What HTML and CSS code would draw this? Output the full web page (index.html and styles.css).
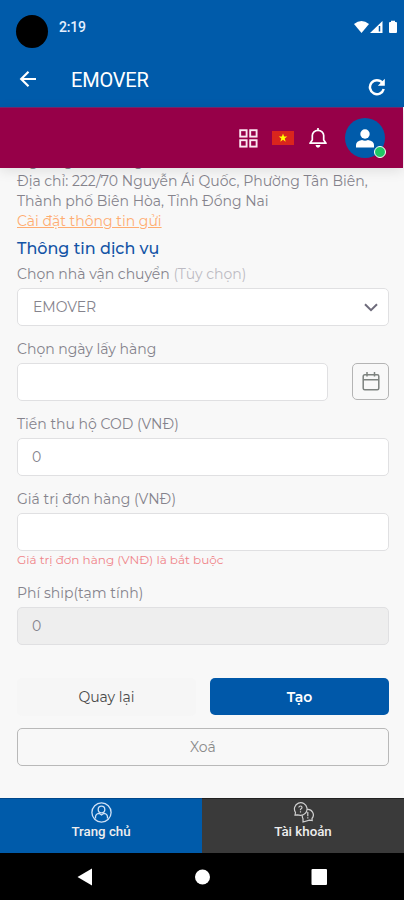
FILE: index.html
```
<!DOCTYPE html>
<html lang="vi">
<head>
<meta charset="utf-8">
<title>EMOVER</title>
<link rel="stylesheet" href="styles.css">
</head>
<body>
<div class="phone">
  <header class="top">
    <div class="status">
      <span class="camera"></span>
      <span class="clock">2:19</span>
      <svg class="signals" width="45" height="16" viewBox="0 0 45 16" fill="#fff">
        <path d="M0 4Q7.500-2 15 4L7.500 13Z"/>
        <path d="M16 13L28.500 1V13Z"/><path d="M25.500 6V11.500" stroke="#005baa" stroke-width="1.500"/>
        <path d="M35 3Q35 2 36 2H37V.8H41V2H42Q43 2 43 3V12Q43 13 42 13H36Q35 13 35 12Z"/>
      </svg>
    </div>
    <div class="appbar">
      <svg width="18" height="18" viewBox="0 0 18 18" fill="none" stroke="#fff" stroke-width="2.200"><path d="M17 9H2.500M9.500 1.700L2.200 9L9.500 16.300"/></svg>
      <h1>EMOVER</h1>
      <svg class="reload" width="18" height="18" viewBox="0 0 18 18" fill="none" stroke="#fff" stroke-width="2.500"><path d="M14.400 4.800A7 7 0 1 0 15.700 11"/><path d="M16.800.8V7.800H9.800Z" fill="#fff" stroke="none"/></svg>
    </div>
  </header>
  <nav class="tools">
    <svg class="grid" width="19" height="19" viewBox="0 0 19 19" fill="none" stroke="#fbe6ef" stroke-width="1.900"><rect x="1.200" y="1.200" width="6.400" height="6.400"/><rect x="11.200" y="1.200" width="6.400" height="6.400"/><rect x="1.200" y="11.200" width="6.400" height="6.400"/><rect x="11.200" y="11.200" width="6.400" height="6.400"/></svg>
    <svg class="flag" width="22" height="14" viewBox="0 0 22 14"><path fill="#da251d" d="M0 0H22V14H0Z"/><path fill="#ff0" d="M11 2.500L12.100 5.600H15.300L12.700 7.600L13.700 10.700L11 8.800L8.300 10.700L9.300 7.600L6.700 5.600H9.900Z"/></svg>
    <svg class="bell" width="18" height="20" viewBox="0 0 18 20" fill="none" stroke="#fff" stroke-width="1.700" stroke-linejoin="round"><path d="M1 15.200H17L14.700 12V7.500A5.700 5.200 0 0 0 3.300 7.500V12Z"/><path d="M9 0V2.500"/><path d="M6.500 17H11.500Q11 19.700 9 19.700T6.500 17Z" fill="#fff" stroke="none"/></svg>
    <div class="avatar">
      <svg width="20" height="19" viewBox="0 0 20 19" fill="#fff"><circle cx="10" cy="5" r="4.700"/><path d="M1 18.500V16Q1 12 7 11Q10 12.500 13 11Q19 12 19 16V18.500Z"/></svg>
      <span class="online"></span>
    </div>
  </nav>
  <main class="content">
    <div class="sender">
      <p>Người gửi: Trương</p>
      <p>Địa chỉ: 222/70 Nguyễn Ái Quốc, Phường Tân Biên,</p>
      <p>Thành phố Biên Hòa, Tỉnh Đồng Nai</p>
      <a class="setup">Cài đặt thông tin gửi</a>
    </div>
    <h2>Thông tin dịch vụ</h2>
    <section class="field">
      <label>Chọn nhà vận chuyển <span class="muted">(Tùy chọn)</span></label>
      <div class="box select"><span>EMOVER</span><svg width="14" height="9" viewBox="0 0 14 9" fill="none" stroke="#6e6b7b" stroke-width="2"><path d="M1 1.200L7 7.200L13 1.200"/></svg></div>
    </section>
    <section class="field">
      <label>Chọn ngày lấy hàng</label>
      <div class="daterow">
        <div class="box"></div>
        <div class="calendar"><svg width="18" height="19" viewBox="0 0 18 19" fill="none" stroke="#7d827f" stroke-width="1.500"><rect x="1.200" y="2.800" width="15.600" height="15" rx="1.500"/><path d="M1 7.700H17M5 0V4.500M12.500 0V4.500"/></svg></div>
      </div>
    </section>
    <section class="field">
      <label>Tiền thu hộ COD (VNĐ)</label>
      <div class="box zero">0</div>
    </section>
    <section class="field">
      <label>Giá trị đơn hàng (VNĐ)</label>
      <div class="box"></div>
      <p class="error">Giá trị đơn hàng (VNĐ) là bắt buộc</p>
    </section>
    <section class="field fee">
      <label>Phí ship(tạm tính)</label>
      <div class="box zero disabled">0</div>
    </section>
    <div class="actions">
      <div class="btn back">Quay lại</div>
      <div class="btn create">Tạo</div>
    </div>
    <div class="btn clear">Xoá</div>
  </main>
  <footer class="tabs">
    <div class="tab active">
      <svg width="21" height="21" viewBox="0 0 21 21" fill="none" stroke="#cfe0f5" stroke-width="1.300"><circle cx="10.500" cy="10.500" r="9.600"/><circle cx="10.500" cy="7.500" r="3.300"/><path d="M4.500 16.500V15Q4.500 11.800 8 11.300L10.500 13L13 11.300Q16.500 11.800 16.500 15V16.500"/></svg>
      <span>Trang chủ</span>
    </div>
    <div class="tab">
      <svg width="21" height="21" viewBox="0 0 21 21" fill="none" stroke="#d0d0d0" stroke-width="1.200"><path d="M2 13L2.500 10.500A6.300 6.300 0 1 1 7.500 13.300L4.500 12.800Z"/><path d="M14 7.500A5.500 5.500 0 0 1 19 16.500L19.200 18.500L16.500 18.200L10 20V16.800A6 6 0 0 1 9.300 13.300"/><path d="M5.800 5.500Q6 4 7.500 4T9 5.500Q9 6.500 7.500 7.300V8.300M7.500 9.300V10.500M14.800 10V14.300M14.800 15.300V16.500"/></svg>
      <span>Tài khoản</span>
    </div>
  </footer>
  <div class="sysnav">
    <svg width="404" height="47" viewBox="0 0 404 47" fill="#fff"><path d="M77.500 24L92 15.500V32.500Z"/><circle cx="202.500" cy="24" r="7.500"/><rect x="311.500" y="16" width="15.500" height="16" rx="1"/></svg>
  </div>
</div>
</body>
</html>
```
FILE: styles.css
```
* { box-sizing: border-box; margin: 0; padding: 0; }
body { background: #f8f8f8; font-family: Montserrat, Inter, "Liberation Sans", sans-serif; color: #85838c; }
.phone { width: 404px; height: 900px; display: flex; flex-direction: column; overflow: hidden; }
svg { display: block; flex: none; }
.top { height: 107px; background: #005baa; color: #fff; font-family: Roboto, sans-serif; }
.status { height: 54px; display: flex; align-items: flex-start; padding: 15px 5px 0 16px; }
.camera { width: 32px; height: 33px; border-radius: 50%; background: #000; }
.clock { margin: 3px 0 0 11px; font-size: 14px; line-height: 18px; font-weight: 500; letter-spacing: -.2px; color: #e5efff; }
.signals { margin: 5px 0 0 auto; }
.appbar { height: 53px; display: flex; align-items: center; padding: 0 18px 4px 19px; }
.appbar h1 { margin: 2px 0 0 34px; font-size: 20px; line-height: 24px; font-weight: 400; letter-spacing: -.2px; }
.reload { margin: 16px 0 0 auto; }
.tools { height: 61px; flex: none; width: 403px; background: #960048; border-top: 1px solid #71266c; display: flex; align-items: center; padding: 0 18px 0 239px; position: relative; box-shadow: 0 3px 12px rgba(0,0,0,.1); }
.flag { margin-left: 14px; }
.bell { margin-left: 15px; }
.avatar { position: relative; margin-left: auto; width: 40px; height: 40px; border-radius: 50%; background: #005baa; display: flex; align-items: center; justify-content: center; }
.online { position: absolute; right: -1px; bottom: 0; width: 12px; height: 12px; border-radius: 50%; background: #20c864; border: 1px solid #fff; }
.content { height: 630px; flex: none; overflow: hidden; padding: 0 15px 0 17px; font-size: 14px; }
.sender { margin-top: -17px; line-height: 20px; white-space: nowrap; }
.setup { display: block; width: max-content; color: #ffac70; text-decoration: underline; }
h2 { margin-top: 6px; font-size: 16px; line-height: 24px; font-weight: 500; color: #1454a6; white-space: nowrap; }
.field { height: 75px; }
.field label { display: block; height: 27px; padding-top: 4px; line-height: 18px; white-space: nowrap; }
.muted { color: #bdbbc3; }
.box { height: 38px; background: #fff; border: 1px solid #e0e0e2; border-radius: 5px; display: flex; align-items: center; padding: 0 10px 0 15px; }
.select { justify-content: space-between; }
.daterow { display: flex; justify-content: space-between; }
.daterow .box { width: 311px; }
.calendar { width: 37px; height: 37px; border: 1px solid #b4b4b4; border-radius: 5px; display: flex; align-items: center; justify-content: center; }
.zero { padding-left: 14px; }
.disabled { background: #eee; }
.error { margin-top: 1px; font-size: 12px; line-height: 16px; color: #f08489; white-space: nowrap; }
.fee { margin-top: 19px; }
.actions { display: flex; gap: 14px; margin-top: 23px; }
.btn { height: 38px; border-radius: 5px; display: flex; align-items: center; justify-content: center; }
.back { width: 179px; background: #f6f6f6; color: #4a4a4a; }
.create { flex: 1; height: 37px; background: #0058a9; color: #fff; font-weight: 600; }
.clear { margin-top: 12px; border: 1px solid #b9b9b9; color: #8a8a8a; }
.tabs { height: 55px; flex: none; display: flex; font-family: Roboto, sans-serif; }
.tab { flex: 1; background: #3a3a3a; border-top: 1px solid #222; color: #eee; display: flex; flex-direction: column; align-items: center; padding-top: 3px; font-size: 13.300px; line-height: 17px; font-weight: 500; }
.active { background: #005baa; border-color: #00478b; }
.sysnav { flex: none; height: 47px; background: #000; }
```
